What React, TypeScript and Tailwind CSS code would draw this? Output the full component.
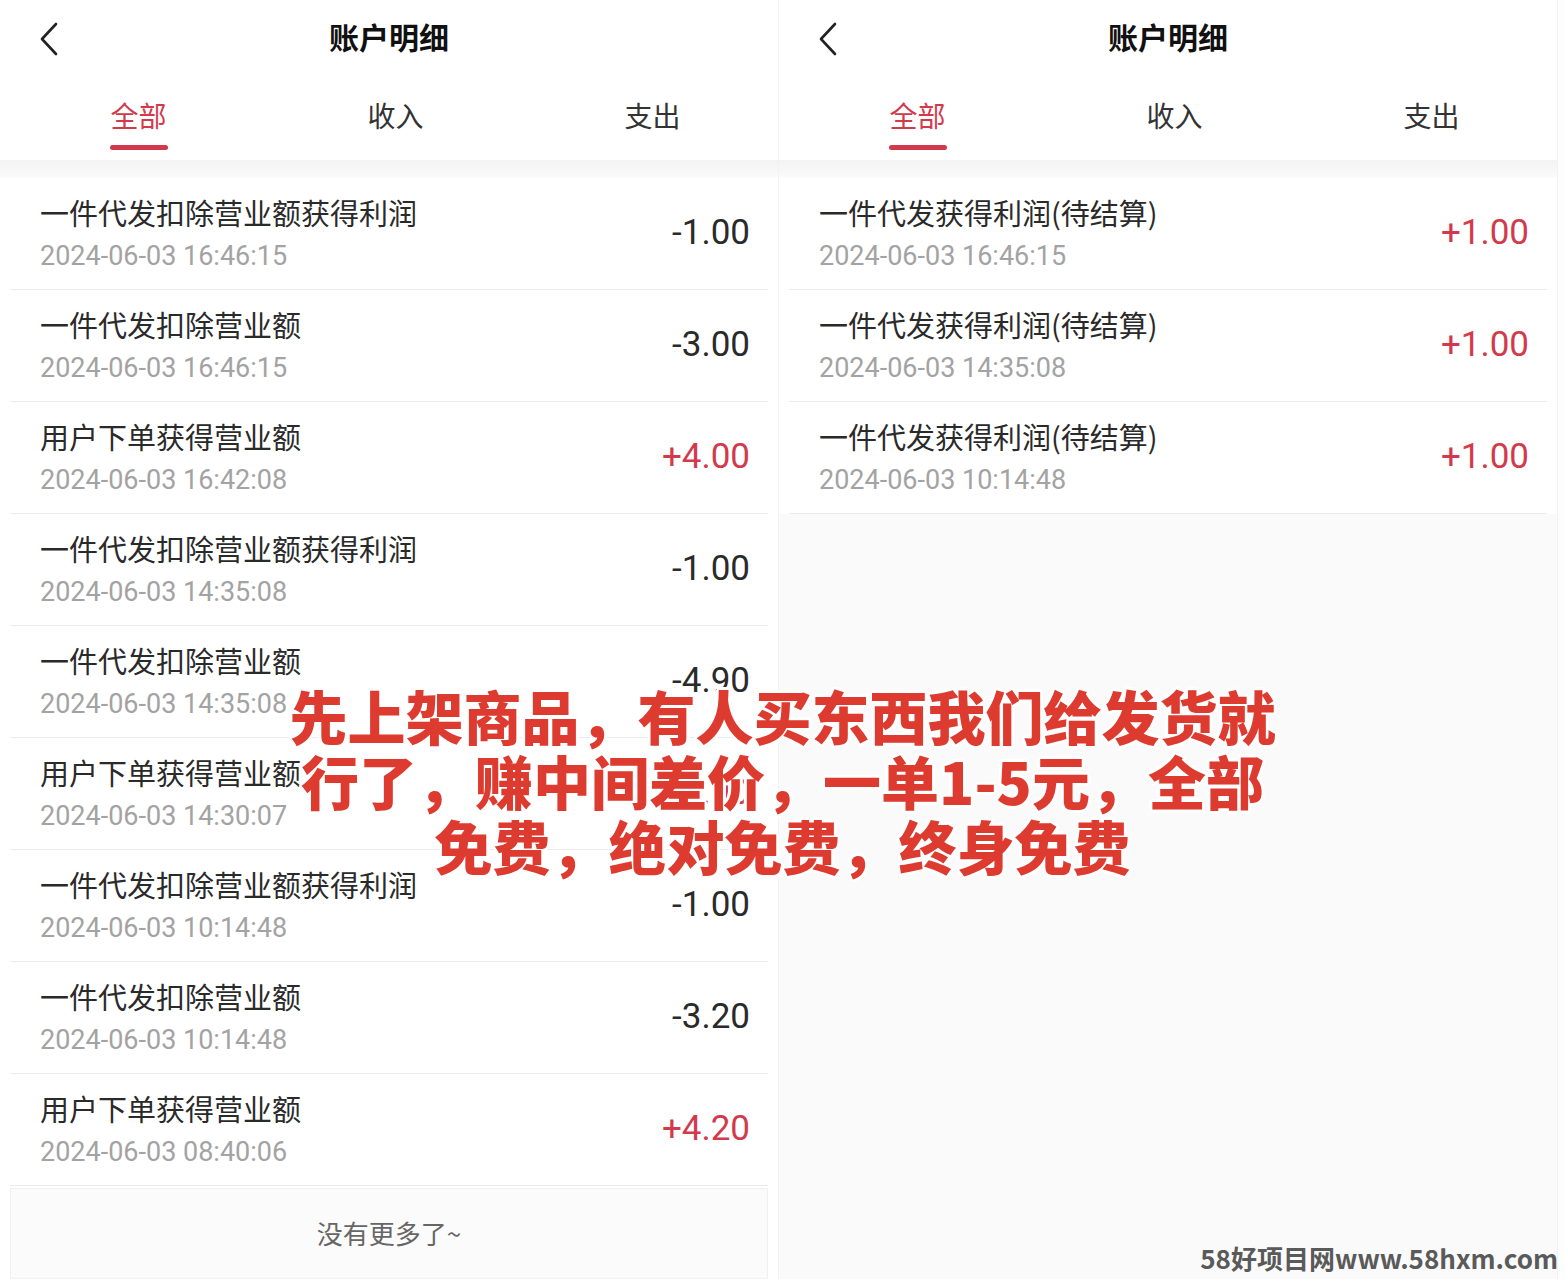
import React from 'react';

interface Record {
    title: string;
    time: string;
    amount: string;
}

const leftRecords: Record[] = [
    { title: '一件代发扣除营业额获得利润', time: '2024-06-03 16:46:15', amount: '-1.00' },
    { title: '一件代发扣除营业额', time: '2024-06-03 16:46:15', amount: '-3.00' },
    { title: '用户下单获得营业额', time: '2024-06-03 16:42:08', amount: '+4.00' },
    { title: '一件代发扣除营业额获得利润', time: '2024-06-03 14:35:08', amount: '-1.00' },
    { title: '一件代发扣除营业额', time: '2024-06-03 14:35:08', amount: '-4.90' },
    { title: '用户下单获得营业额', time: '2024-06-03 14:30:07', amount: '+4.90' },
    { title: '一件代发扣除营业额获得利润', time: '2024-06-03 10:14:48', amount: '-1.00' },
    { title: '一件代发扣除营业额', time: '2024-06-03 10:14:48', amount: '-3.20' },
    { title: '用户下单获得营业额', time: '2024-06-03 08:40:06', amount: '+4.20' },
];

const rightRecords: Record[] = [
    { title: '一件代发获得利润(待结算)', time: '2024-06-03 16:46:15', amount: '+1.00' },
    { title: '一件代发获得利润(待结算)', time: '2024-06-03 14:35:08', amount: '+1.00' },
    { title: '一件代发获得利润(待结算)', time: '2024-06-03 10:14:48', amount: '+1.00' },
];

const cjk = "font-['Noto_Sans_CJK_SC',sans-serif]";
const num = "font-['Roboto','Noto_Sans_CJK_SC',sans-serif]";

function BackIcon() {
    return (
        <svg width="22" height="34" viewBox="0 0 22 34" fill="none">
            <path d="M18 2 L4 17 L18 32" stroke="#222" strokeWidth="2.6" strokeLinecap="round" strokeLinejoin="round" />
        </svg>
    );
}

function Row({ item }: { item: Record }) {
    const income = item.amount.startsWith('+');
    return (
        <div className="h-[112px] flex flex-col bg-white">
            <div className="flex-1 flex items-center justify-between pl-[40px] pr-[28px]">
                <div className="flex flex-col">
                    <span className={`${cjk} text-[29px] leading-[36px] text-[#2a2a2a]`}>{item.title}</span>
                    <span className={`${num} text-[27px] leading-[34px] mt-[9px] text-[#a3a3a3]`}>{item.time}</span>
                </div>
                <span className={`${num} text-[35px] ${income ? 'text-[#d23a4c]' : 'text-[#2a2a2a]'}`}>{item.amount}</span>
            </div>
            <div className="mx-[10px] h-px bg-[#ebebeb]" />
        </div>
    );
}

function Tab({ label, active }: { label: string; active?: boolean }) {
    return (
        <div className="flex flex-col items-center pt-[20px]">
            <span className={`${cjk} text-[28px] leading-[38px] ${active ? 'text-[#d23a4c]' : 'text-[#333]'}`}>{label}</span>
            {active && <div className="mt-[11px] w-[58px] h-[5px] rounded-full bg-[#d23a4c]" />}
        </div>
    );
}

function Panel({ records, footer }: { records: Record[]; footer: boolean }) {
    return (
        <div className="flex flex-col h-full bg-white">
            <div className="h-[76px] relative flex items-center justify-center">
                <div className="absolute left-[38px] top-[22px]">
                    <BackIcon />
                </div>
                <span className={`${cjk} text-[30px] font-bold text-[#111] -mt-[3px]`}>账户明细</span>
            </div>
            <div className="h-[84px] grid grid-cols-[257px_257px_257px] pl-[10px]">
                <Tab label="全部" active />
                <Tab label="收入" />
                <Tab label="支出" />
            </div>
            <div className="h-[18px] bg-gradient-to-b from-[#f3f3f3] to-[#fbfbfb]" />
            <div className="flex flex-col">
                {records.map((r, i) => (
                    <Row key={i} item={r} />
                ))}
            </div>
            {footer ? (
                <div className="flex-1 mx-[10px] mt-[2px] bg-[#fbfbfb] border border-[#f0f0f0] flex justify-center pt-[24px]">
                    <span className={`${cjk} text-[26px] text-[#666]`}>没有更多了~</span>
                </div>
            ) : (
                <div className="flex-1 bg-[#fafafa]" />
            )}
        </div>
    );
}

export default function App() {
    return (
        <div className="relative w-[1565px] h-[1279px] overflow-hidden bg-[#fdfdfd]">
            <div className="flex h-full">
                <div className="w-[778px] h-full">
                    <Panel records={leftRecords} footer />
                </div>
                <div className="w-[780px] h-full border-x border-[#f2f2f2]">
                    <Panel records={rightRecords} footer={false} />
                </div>
            </div>

            <div
                className={`absolute left-0 right-0 top-[683px] flex flex-col items-center ${cjk} font-black text-[58px] leading-[65px] text-[#dd3b2f] [text-shadow:0_0_3px_#fff,2px_2px_0_#fff,-2px_-2px_0_#fff,2px_-2px_0_#fff,-2px_2px_0_#fff,0_3px_0_#fff,0_-3px_0_#fff,3px_0_0_#fff,-3px_0_0_#fff]`}
            >
                <span>先上架商品，有人买东西我们给发货就</span>
                <span>行了，赚中间差价，一单1-5元，全部</span>
                <span>免费，绝对免费，终身免费</span>
            </div>

            <div className={`absolute right-[7px] bottom-[2px] ${cjk} font-bold text-[26px] text-[#5a5a5a]`}>
                58好项目网www.58hxm.com
            </div>
        </div>
    );
}
